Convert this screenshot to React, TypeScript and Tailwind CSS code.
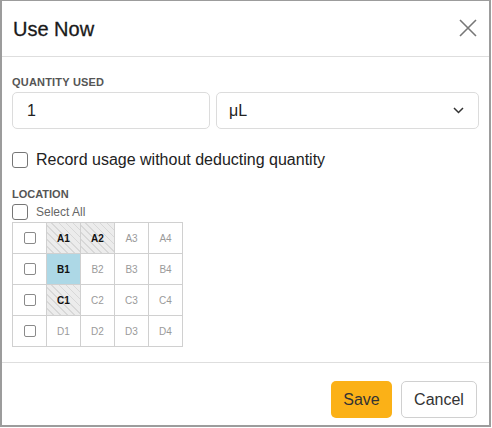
import React from 'react';

interface Well {
    id: string;
    used: boolean;
    selected: boolean;
}

const rows = ['A', 'B', 'C', 'D'];
const usedWells = ['A1', 'A2', 'C1'];
const selectedWells = ['B1'];

const wells: Well[][] = rows.map((r) =>
    [1, 2, 3, 4].map((c) => {
        const id = `${r}${c}`;
        return { id, used: usedWells.includes(id), selected: selectedWells.includes(id) };
    })
);

const Box: React.FC<{ size?: 'sm' | 'md' }> = ({ size = 'md' }) => (
    <span
        className={
            size === 'md'
                ? 'inline-block w-[16px] h-[16px] rounded-[3px] border-[1.5px] border-[#767676] bg-white'
                : 'inline-block w-[12px] h-[12px] rounded-[2px] border border-[#8a8a8a] bg-white'
        }
    />
);

const WellCell: React.FC<{ well: Well }> = ({ well }) => {
    let cls = 'flex items-center justify-center border-r border-b border-[#d0d0d0] text-[10px]';
    if (well.selected) {
        cls += ' bg-[#add8e6] font-bold text-[#111]';
    } else if (well.used) {
        cls +=
            ' bg-[repeating-linear-gradient(45deg,#ececec_0,#ececec_4px,#d8d8d8_4px,#d8d8d8_5px)] font-bold text-[#111]';
    } else {
        cls += ' bg-white text-[#9a9a9a]';
    }
    return <div className={cls}>{well.id}</div>;
};

const App: React.FC = () => {
    return (
        <div className="w-[492px] h-[428px] bg-white font-['Liberation_Sans',Arial,sans-serif] text-[#222]">
            <div className="w-[491px] h-[427px] border border-[#9c9c9c] border-l-2 border-b-2 border-r-2 flex flex-col">
                {/* header */}
                <div className="h-[56px] shrink-0 flex items-center justify-between pl-[11px] pr-[12px] border-b border-[#dedede]">
                    <h3 className="text-[20px] leading-none text-[#1a1a1a] mt-[1px] [-webkit-text-stroke:0.3px_#1a1a1a]">Use Now</h3>
                    <svg width="18" height="18" viewBox="0 0 18 18" className="mt-[-2px]">
                        <path d="M1 1 L17 17 M17 1 L1 17" stroke="#777" strokeWidth="1.6" />
                    </svg>
                </div>

                {/* body */}
                <div className="flex-1 px-[10px] pt-[20px] border-b border-[#dedede]">
                    <div className="text-[11px] font-bold text-[#555] tracking-[0.2px] leading-none">QUANTITY USED</div>
                    <div className="flex gap-[6px] mt-[4px]">
                        <div className="w-[198px] h-[37px] rounded-[5px] border border-[#dcdcdc] flex items-center px-[14px] text-[16px]">
                            1
                        </div>
                        <div className="flex-1 h-[37px] rounded-[5px] border border-[#dcdcdc] flex items-center justify-between pl-[12px] pr-[14px] text-[16px]">
                            <span>μL</span>
                            <svg width="11" height="7" viewBox="0 0 11 7">
                                <path d="M1 1 L5.5 5.5 L10 1" stroke="#333" strokeWidth="1.5" fill="none" />
                            </svg>
                        </div>
                    </div>

                    <label className="flex items-center gap-[8px] mt-[19px] text-[16px] text-[#222]">
                        <Box />
                        <span>Record usage without deducting quantity</span>
                    </label>

                    <div className="text-[11px] font-bold text-[#555] leading-none mt-[17px]">LOCATION</div>
                    <label className="flex items-center gap-[8px] mt-[4px] text-[12px] leading-[16px] text-[#666]">
                        <Box />
                        <span>Select All</span>
                    </label>

                    <div className="mt-[2px] grid grid-cols-[repeat(5,34px)] grid-rows-[repeat(4,31px)] w-[171px] border-l border-t border-[#d0d0d0]">
                        {wells.map((row, i) => (
                            <React.Fragment key={rows[i]}>
                                <div className="flex items-center justify-center border-r border-b border-[#d0d0d0]">
                                    <Box size="sm" />
                                </div>
                                {row.map((w) => (
                                    <WellCell key={w.id} well={w} />
                                ))}
                            </React.Fragment>
                        ))}
                    </div>
                </div>

                {/* footer */}
                <div className="h-[62px] shrink-0 flex items-end justify-end gap-[9px] pr-[12px] pb-[7px]">
                    <button className="w-[61px] h-[37px] rounded-[5px] bg-[#fbb117] text-[16px] text-[#333]">Save</button>
                    <button className="w-[76px] h-[37px] rounded-[5px] border border-[#d0d0d0] bg-white text-[16px] text-[#333]">
                        Cancel
                    </button>
                </div>
            </div>
        </div>
    );
};

export default App;
